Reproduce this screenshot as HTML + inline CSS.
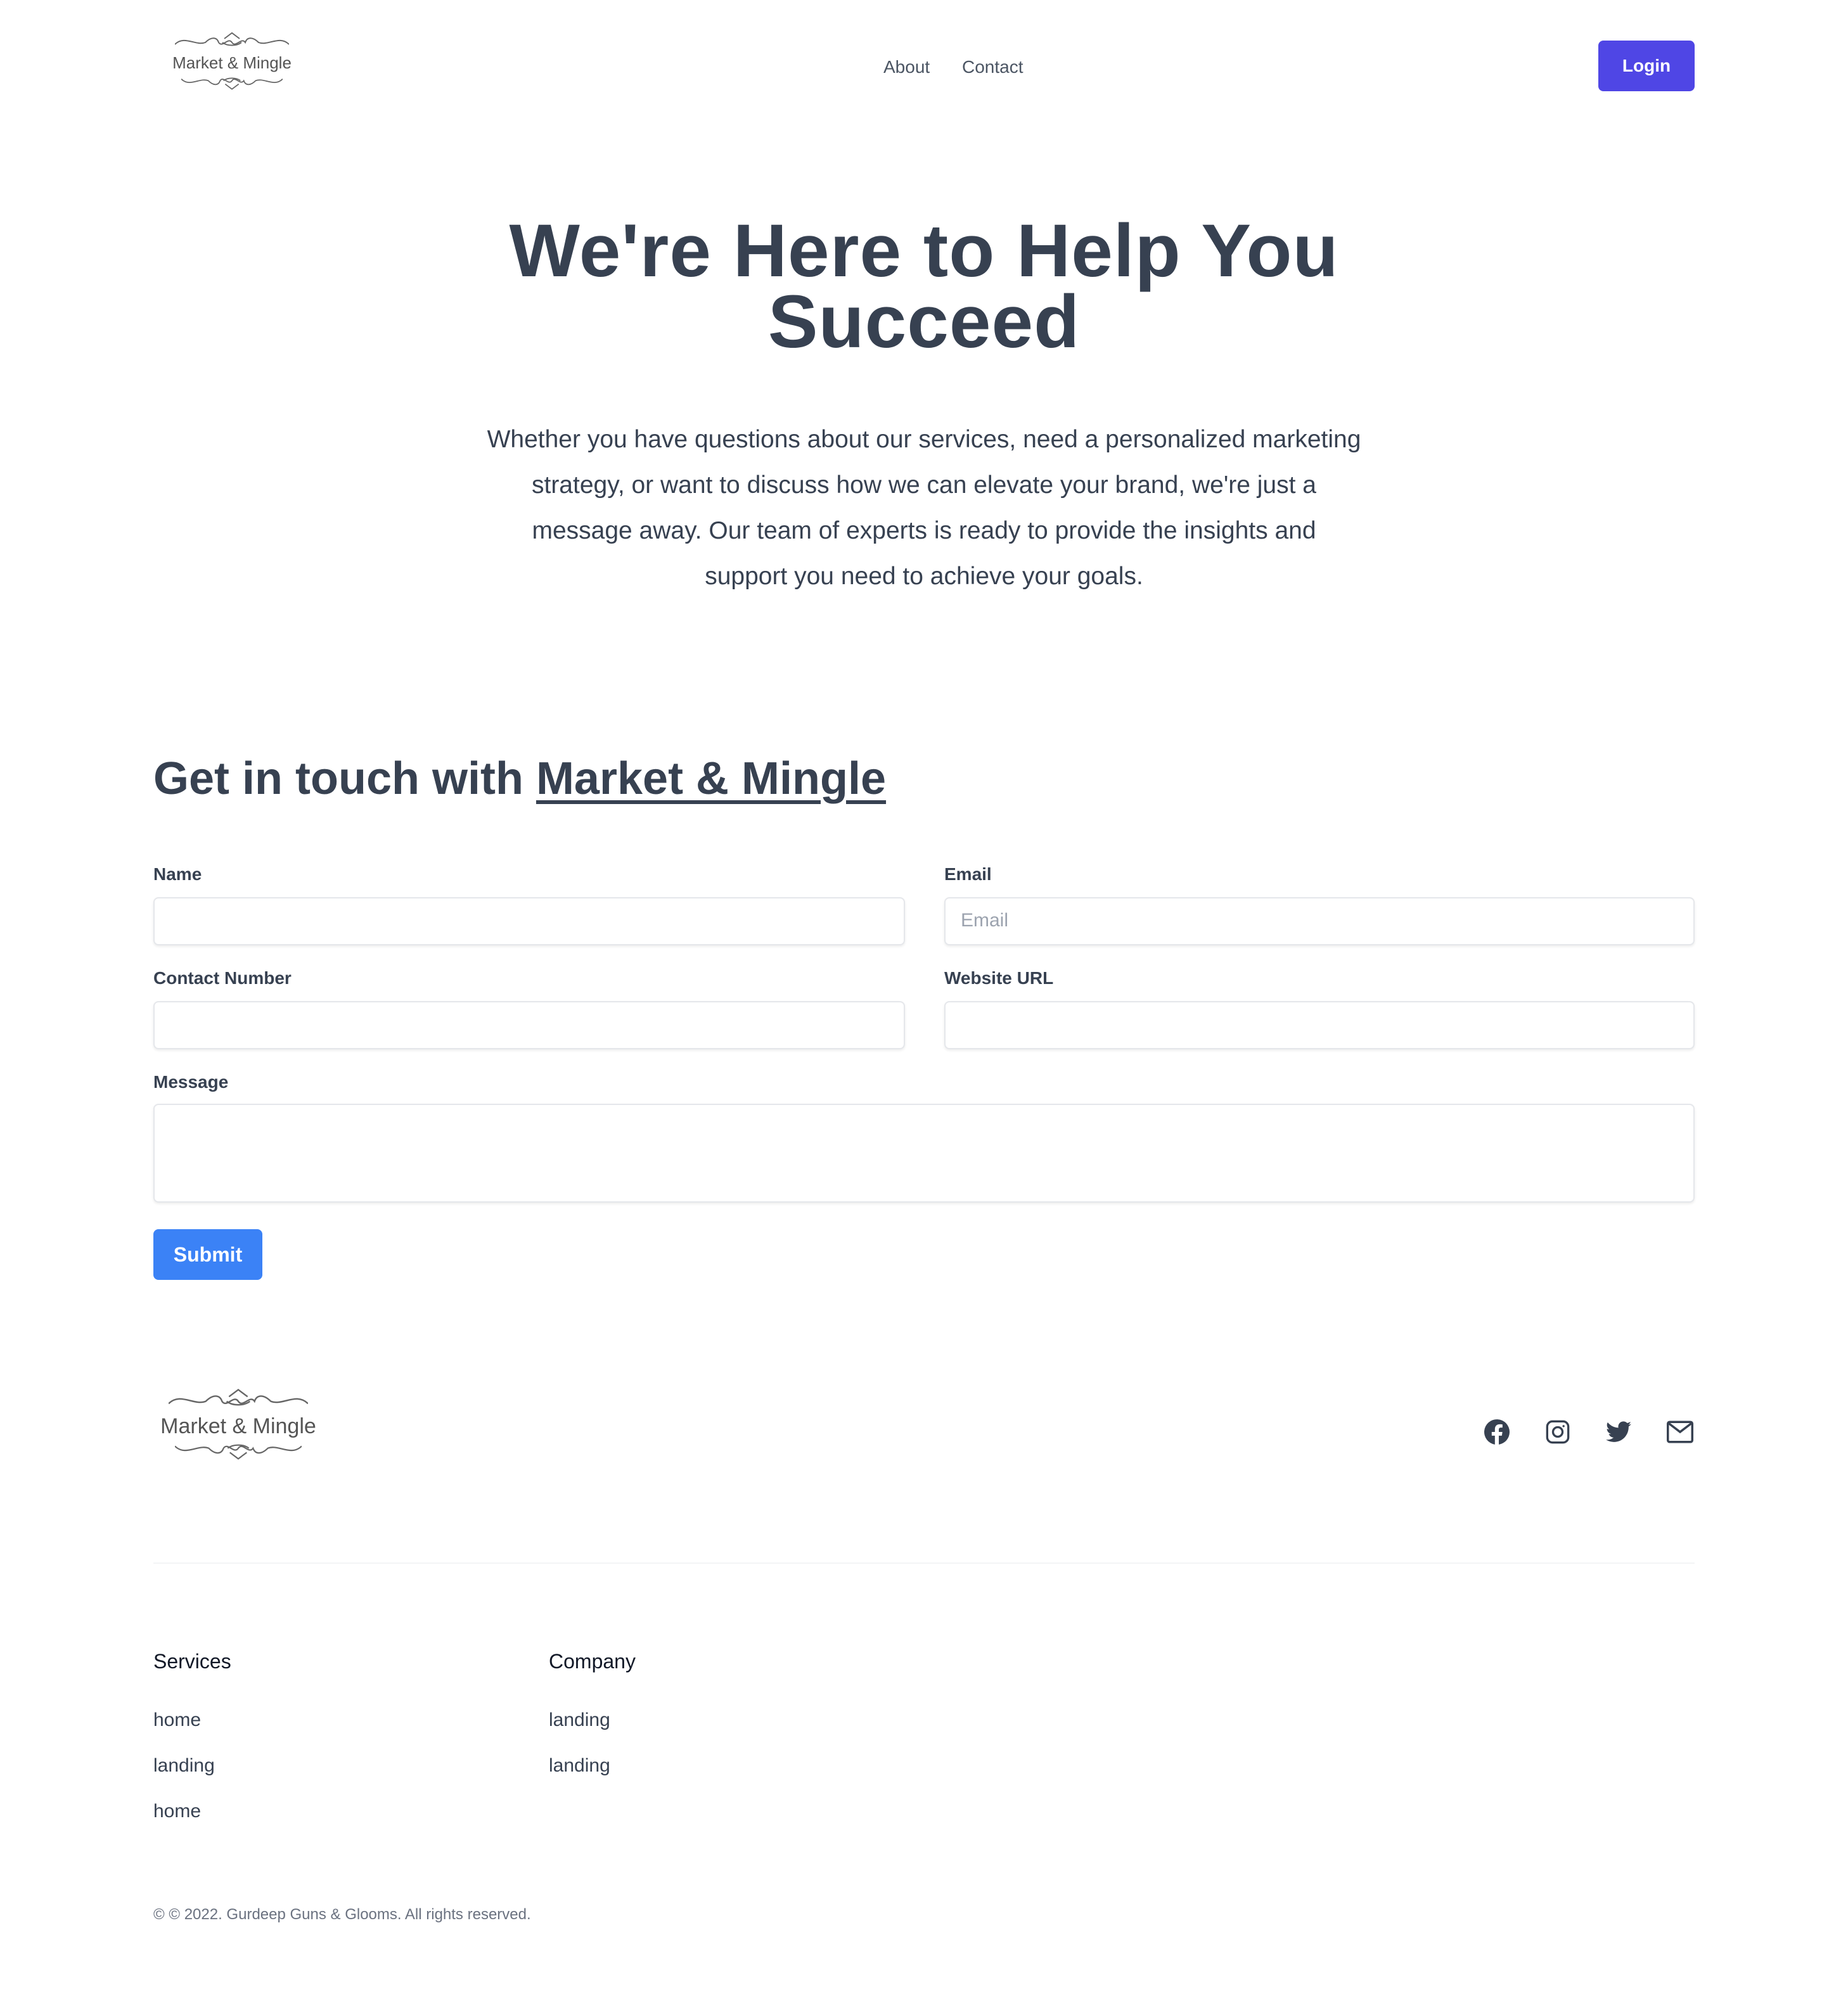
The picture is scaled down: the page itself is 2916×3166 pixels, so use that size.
<!DOCTYPE html>
<html><head><meta charset="utf-8"><style>
html,body{margin:0;padding:0;background:#fff}
body{width:1458px;height:1583px;zoom:2;position:relative;overflow:hidden;font-family:"Liberation Sans",sans-serif;color:#374151}
.a{position:absolute}
.logo{text-align:center;color:#555}
.lbl{font-weight:bold;font-size:14px}
.in{position:absolute;border:1px solid #e5e7eb;border-radius:4px;box-shadow:0 1px 2px rgba(0,0,0,.08);background:#fff;box-sizing:border-box}
.lk{font-size:15px;color:#374151}
</style></head><body>
<svg width="0" height="0" style="position:absolute"><defs>
<g id="orn" fill="none" stroke="#666" stroke-width="1.3">
<path d="M0 10 C10 0 22 12 32 8 C38 2 44 2 46 8 C50 14 56 2 60 8 C64 14 70 2 74 8 C76 2 82 2 88 8 C98 12 110 0 120 10"/>
<path d="M52 4 L60 -2 L68 4 M50 8 C55 12 65 12 70 8"/>
</g></defs></svg>
<div class="a logo" style="left:130px;top:24px;width:106px">
<svg width="90" height="16" viewBox="0 -3 120 18"><use href="#orn"/></svg>
<div style="font-size:13px;margin-top:-2px">Market &amp; Mingle</div>
<svg width="80" height="14" viewBox="0 -3 120 18" style="transform:scaleY(-1)"><use href="#orn"/></svg>
</div>
<div class="a" style="left:697px;top:45px;font-size:14px;color:#4b5563">About</div>
<div class="a" style="left:759px;top:45px;font-size:14px;color:#4b5563">Contact</div>
<div class="a" style="left:1261px;top:32px;width:76px;height:40px;background:#4f46e5;border-radius:4px;color:#fff;font-weight:bold;font-size:14px;line-height:40px;text-align:center">Login</div>
<div class="a" style="left:0;width:1458px;top:170px;text-align:center;font-size:59px;font-weight:bold;line-height:56px;color:#374151;letter-spacing:0.5px">We're Here to Help You<br>Succeed</div>
<div class="a" style="left:329px;width:800px;top:329px;text-align:center;font-size:19.5px;line-height:36px;color:#374151">Whether you have questions about our services, need a personalized marketing<br>strategy, or want to discuss how we can elevate your brand, we're just a<br>message away. Our team of experts is ready to provide the insights and<br>support you need to achieve your goals.</div>
<div class="a" style="left:121px;top:594px;font-size:36px;font-weight:bold">Get in touch with <span style="text-decoration:underline;text-decoration-thickness:3px;text-underline-offset:5px">Market &amp; Mingle</span></div>
<div class="a lbl" style="left:121px;top:682px">Name</div>
<div class="a lbl" style="left:745px;top:682px">Email</div>
<div class="in" style="left:121px;top:708px;width:593px;height:38px"></div>
<div class="in" style="left:745px;top:708px;width:592px;height:38px;padding:9px 12px;color:#9ca3af;font-size:15px">Email</div>
<div class="a lbl" style="left:121px;top:764px">Contact Number</div>
<div class="a lbl" style="left:745px;top:764px">Website URL</div>
<div class="in" style="left:121px;top:790px;width:593px;height:38px"></div>
<div class="in" style="left:745px;top:790px;width:592px;height:38px"></div>
<div class="a lbl" style="left:121px;top:846px">Message</div>
<div class="in" style="left:121px;top:871px;width:1216px;height:78px"></div>
<div class="a" style="left:121px;top:970px;width:86px;height:40px;background:#3b82f6;border-radius:4px;color:#fff;font-weight:bold;font-size:16px;line-height:40px;text-align:center">Submit</div>
<div class="a logo" style="left:126px;top:1094px;width:124px">
<svg width="110" height="20" viewBox="0 -3 120 18"><use href="#orn"/></svg>
<div style="font-size:17px;margin-top:-2px">Market &amp; Mingle</div>
<svg width="100" height="18" viewBox="0 -3 120 18" style="transform:scaleY(-1)"><use href="#orn"/></svg>
</div>
<svg class="a" style="left:1171px;top:1120px" width="20" height="20" viewBox="0 0 24 24"><path fill="#374151" d="M24 12a12 12 0 1 0-13.9 11.9v-8.4H7.1V12h3V9.4c0-3 1.8-4.7 4.5-4.7 1.300 0 2.7.2 2.7.2v3h-1.5c-1.5 0-2 .9-2 1.9V12h3.4l-.5 3.5h-2.9v8.4A12 12 0 0 0 24 12z"/></svg>
<svg class="a" style="left:1219px;top:1120px" width="20" height="20" viewBox="0 0 24 24" fill="none" stroke="#374151" stroke-width="2"><rect x="2" y="2" width="20" height="20" rx="5"/><circle cx="12" cy="12" r="4.5"/><circle cx="17.5" cy="6.5" r="1" fill="#374151" stroke="none"/></svg>
<svg class="a" style="left:1267px;top:1121px" width="20" height="18" viewBox="0 0 24 20"><path fill="#374151" d="M24 2.4a9.8 9.8 0 0 1-2.8.8A4.9 4.9 0 0 0 23.3.4a9.9 9.9 0 0 1-3.1 1.2A4.9 4.9 0 0 0 11.8 6 14 14 0 0 1 1.7.9a4.9 4.9 0 0 0 1.5 6.6 4.9 4.9 0 0 1-2.2-.6 4.9 4.9 0 0 0 3.9 4.9 4.9 4.9 0 0 1-2.2.1 4.9 4.9 0 0 0 4.6 3.4A9.9 9.9 0 0 1 0 17.3 14 14 0 0 0 7.5 19.5c9.1 0 14-7.5 14-14v-.6A10 10 0 0 0 24 2.4z"/></svg>
<svg class="a" style="left:1315px;top:1121px" width="21" height="18" viewBox="0 0 24 20" fill="none" stroke="#374151" stroke-width="2"><rect x="1" y="1" width="22" height="18" rx="1.5"/><path d="M1.5 2l10.5 8 10.5-8"/></svg>
<div class="a" style="left:121px;top:1233px;width:1216px;height:1px;background:#f3f4f6"></div>
<div class="a" style="left:121px;top:1302px;font-size:16px;color:#111827">Services</div>
<div class="a" style="left:433px;top:1302px;font-size:16px;color:#111827">Company</div>
<div class="a lk" style="left:121px;top:1349px">home</div>
<div class="a lk" style="left:121px;top:1385px">landing</div>
<div class="a lk" style="left:121px;top:1421px">home</div>
<div class="a lk" style="left:433px;top:1349px">landing</div>
<div class="a lk" style="left:433px;top:1385px">landing</div>
<div class="a" style="left:121px;top:1504px;font-size:12px;color:#6b7280">© © 2022. Gurdeep Guns &amp; Glooms. All rights reserved.</div>
</body></html>
